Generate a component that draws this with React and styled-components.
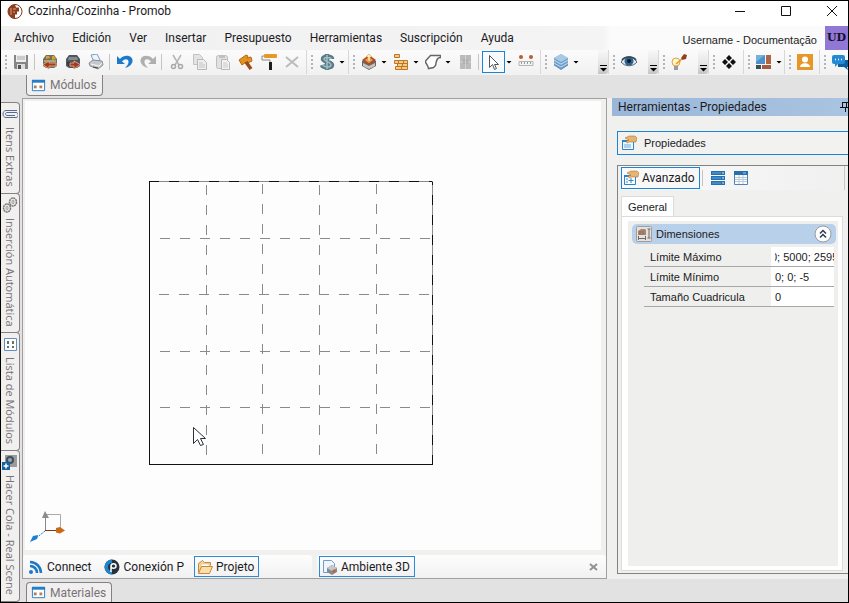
import React, { useLayoutEffect, useRef } from 'react'
import styled, { createGlobalStyle, css } from 'styled-components'

const ui = `Roboto, 'Open Sans', sans-serif`
const humanist = `'Open Sans', 'Noto Sans', sans-serif`
const classic = `'Liberation Sans', Arial, sans-serif`

const GlobalStyle = createGlobalStyle`
  * {
    box-sizing: border-box;
  }
  body {
    margin: 0;
    font-family: ${ui};
    font-size: 12px;
    line-height: 16px;
    color: #1b1b24;
  }
  button, input {
    margin: 0;
    padding: 0;
    border: none;
    background: none;
    font: inherit;
    color: inherit;
  }
  svg {
    display: block;
    flex: none;
  }
`

const Window = styled.div`
  display: flex;
  flex-direction: column;
  min-height: 100vh;
  overflow: hidden;
  border: 1px solid #000;
  background: #e2e2e2;
`

const TitleBar = styled.header`
  display: flex;
  align-items: center;
  height: 25px;
  padding-left: 6px;
  background: #fff;
`

const Title = styled.h1`
  flex: 1;
  margin: 0;
  padding: 0 0 6px 5px;
  font-size: 12px;
  font-weight: 400;
`

const WindowButtons = styled.div`
  display: flex;
  gap: 14px;
  padding-bottom: 6px;
`

const WindowButton = styled.button`
  display: grid;
  place-items: center;
  width: 32px;
  height: 18px;
`

const MenuBar = styled.nav`
  display: flex;
  align-items: center;
  gap: 18px;
  height: 24px;
  padding-left: 13px;
  background: linear-gradient(90deg, #f0f0f0, #f4f4f4 71%, #fbfbfb 72%);
`

const UserName = styled.span`
  margin-left: auto;
  padding-top: 4px;
  font-family: ${classic};
  font-size: 11px;
  white-space: nowrap;
`

const Avatar = styled.button`
  align-self: flex-end;
  width: 23px;
  height: 24px;
  margin-left: -10px;
  background: #9177d6;
  font-family: 'DejaVu Serif', serif;
  font-size: 11px;
  font-weight: 700;
  color: #17102c;
`

const ToolBar = styled.div`
  display: flex;
  height: 25px;
  padding-bottom: 1px;
  background: linear-gradient(#fbfbfb, #f1f1f1);
`

const Group = styled.div`
  display: flex;
  align-items: center;
  flex: none;
  width: ${({ $width }) => $width}px;
  border-right: 1px solid #d8d8d8;
`

const Grip = styled.i`
  flex: none;
  width: 2px;
  height: 15px;
  margin: 0 2px 0 4px;
  background: repeating-linear-gradient(#b5b5b5 0 2px, transparent 2px 4px);
`

const Tool = styled.button`
  display: grid;
  place-items: center;
  flex: none;
  width: 23px;
  height: 22px;
  ${({ $active }) =>
    $active &&
    css`
      border: 1px solid #1d83d4;
      background: #f8fbfe;
    `}
`

const Caret = styled.i`
  flex: none;
  width: 9px;
  &::after {
    content: '';
    display: block;
    margin-left: 1px;
    width: 6px;
    height: 3px;
    background: #000;
    clip-path: polygon(0 0, 100% 0, 50% 100%);
  }
`

const Separator = styled.i`
  flex: none;
  width: 1px;
  height: 16px;
  margin: 0 3px 0 2px;
  background: #c4c4c4;
`

const Overflow = styled.button`
  display: grid;
  place-items: end center;
  align-self: stretch;
  width: 10px;
  margin-left: auto;
  padding-bottom: 2px;
  border-radius: 0 0 3px 0;
  background: linear-gradient(#f8f8f8, #e4e4e4 60%, #c4c4c4);
`

const Workspace = styled.div`
  display: flex;
  flex: 1;
`

const SideTabs = styled.div`
  display: flex;
  flex-direction: column;
  flex: none;
  width: 19px;
  margin-right: 2px;
  padding-top: 28px;
`

const SideTab = styled.button`
  display: flex;
  align-items: center;
  gap: 5px;
  flex: ${({ $fill }) => ($fill ? '1' : 'none')};
  width: 19px;
  margin-top: -1px;
  padding: 3px 0 6px;
  border: 1px solid #858083;
  border-left: none;
  border-radius: 0 4px 4px 0;
  background: #f1f0ee;
  writing-mode: vertical-rl;
  font-family: ${humanist};
  font-size: 11px;
  color: #77737a;
  white-space: nowrap;
  svg {
    margin: 0 1px;
  }
`

const Desk = styled.div`
  display: flex;
  flex-direction: column;
  flex: 1;
  min-width: 0;
`

const EdgeStrip = styled.div`
  display: flex;
  flex: none;
  height: 23px;
  padding-left: 4px;
  align-items: ${({ $bottom }) => ($bottom ? 'flex-end' : 'flex-start')};
`

const EdgeTab = styled.button`
  display: flex;
  align-items: center;
  gap: 4px;
  height: ${({ $bottom }) => ($bottom ? 20 : 21)}px;
  padding: 0 5px 0 4px;
  border: 1px solid #858083;
  border-radius: ${({ $bottom }) => ($bottom ? '4px 4px 0 0' : '0 0 4px 4px')};
  border-${({ $bottom }) => ($bottom ? 'bottom' : 'top')}: none;
  background: #f1f0ee;
  color: #77737a;
`

const Body = styled.div`
  display: flex;
  flex: 1;
  background: #f0f0ee;
`

const MainPanel = styled.main`
  display: flex;
  flex-direction: column;
  flex: 1;
  min-width: 0;
  border: 1px solid #a0a0a0;
`

const Canvas = styled.div`
  position: relative;
  flex: 1;
  margin: 2px 5px 5px 2px;
  background: #fdfdfd;
`

const Drawing = styled.svg`
  width: 100%;
  height: 440px;
`

const Axes = styled.svg`
  position: absolute;
  left: 4px;
  bottom: 7px;
`

const ViewTabs = styled.div`
  display: flex;
  gap: 5px;
  height: 23px;
`

const ViewGroup = styled.div`
  display: flex;
  align-items: center;
  flex: 1;
  gap: ${({ $gap }) => $gap || 0}px;
  padding: 0 7px 0 2px;
  border-radius: 3px;
  background: linear-gradient(#fdfdfd, #f1f1f1);
`

const ViewTab = styled.button`
  display: flex;
  align-items: center;
  gap: 3px;
  height: 21px;
  padding: 0 4px 0 2px;
  border: 1px solid ${({ $active }) => ($active ? '#2a8ad8' : 'transparent')};
  white-space: nowrap;
`

const CloseTab = styled.button`
  margin-left: auto;
`

const SidePanel = styled.aside`
  flex: none;
  width: 236px;
  margin-left: 5px;
  font-family: ${classic};
  font-size: 11px;
`

const PanelHeader = styled.h2`
  display: flex;
  align-items: center;
  justify-content: space-between;
  height: 18px;
  margin: 0 0 15px;
  padding-left: 6px;
  background: linear-gradient(90deg, #9ab6d8, #a9c4e0);
  font-family: ${ui};
  font-size: 12px;
  font-weight: 400;
`

const Selection = styled.button`
  display: flex;
  align-items: center;
  gap: 7px;
  width: 231px;
  height: 24px;
  margin-left: 5px;
  padding-left: 3px;
  border: 1px solid #1d83d4;
  border-right: none;
  background: #f2f2f1;
`

const Inspector = styled.div`
  display: flex;
  flex-direction: column;
  height: 409px;
  margin: 10px 0 0 5px;
  padding-left: 3px;
  border: 1px solid #838383;
  border-right: none;
`

const InspectorBar = styled.div`
  display: flex;
  align-items: center;
  height: 24px;
  margin-right: 3px;
  border-right: 1px solid #c9c9c9;
  background: linear-gradient(90deg, #fafafa, #f0f0f0);
`

const Advanced = styled.button`
  display: flex;
  align-items: center;
  gap: 3px;
  width: 79px;
  height: 22px;
  padding-left: 1px;
  border: 1px solid #1d83d4;
  font-family: ${ui};
  font-size: 12px;
`

const PageTab = styled.button`
  align-self: flex-start;
  width: 53px;
  height: 21px;
  margin: 6px 0 -1px;
  border: 1px solid #dcdcdc;
  border-bottom: none;
  background: #fff;
`

const Page = styled.div`
  flex: 1;
  margin: 0 5px 2px 0;
  padding: 4px 4px 4px 6px;
  border: 1px solid #dcdcdc;
  background: #fff;
`

const PageInner = styled.div`
  height: 100%;
  padding: 3px 2px 0 4px;
  background: #efefed;
`

const Section = styled.h3`
  display: flex;
  align-items: center;
  gap: 4px;
  height: 20px;
  margin: 0 0 3px;
  padding: 0 4px;
  border-radius: 5px;
  background: #b8d0ea;
  font-size: 11px;
  font-weight: 400;
  button {
    margin-left: auto;
  }
`

const Field = styled.div`
  display: grid;
  grid-template-columns: 1fr 63px;
  align-items: center;
  height: 20px;
  margin: 0 2px 0 12px;
  padding-left: 6px;
  border-bottom: 1px solid #a8a8a8;
  input {
    width: 100%;
    height: 19px;
    padding: 0;
    border: 0 solid #fff;
    border-left-width: 4px;
    background: #fff;
  }
`

const Icon = ({ children, size = 16 }) => (
  <svg width={size} height={size} viewBox="0 0 16 16" fill="none" aria-hidden="true">
    {children}
  </svg>
)

const icons = {
  save: (
    <>
      <path d="M1 1h14v14H2l-1-1z" fill="#858585" />
      <path d="M3 1h10v7H3z" fill="#eee" />
      <path d="M4 3h8M4 5h8" stroke="#aaa" />
      <path d="M4 10h8v5H4z" fill="#ddd" />
      <path d="M5 11h3v4H5z" fill="#555" />
    </>
  ),
  importBox: (
    <>
      <path d="M4 1h8l3 4v7l-3 2H4l-3-2V5z" fill="#6d735a" />
      <path d="M4 2h3l1 2-4 1zM10 2h2l2 3-4 1z" fill="#e49b32" />
      <path d="M2 6h12v2H2z" fill="#a8a681" />
      <path d="M7 7v2h7v3H7v3L1 10.500z" fill="#a23b1e" stroke="#e2a27e" />
    </>
  ),
  exportBox: (
    <>
      <path d="M4 1h8l3 4v7l-3 2H4l-3-2V5z" fill="#52565b" />
      <path d="M4 3h8l1 3H3z" fill="#858b90" />
      <path d="M2 8h5v4H3z" fill="#34373a" />
      <path d="M9 7v2H5v3h4v3l6-4.500z" fill="#a23b1e" stroke="#dc9c80" />
    </>
  ),
  printer: (
    <>
      <path d="M3 1l6-1 3 6-6 2z" fill="#eef4fb" stroke="#7c9cc4" />
      <path d="M1 9l4-3 9 1 1 4-5 4-8-3z" fill="#c5c8cb" stroke="#8b8f94" />
      <path d="M3 10l8 2 3-3" stroke="#f7f7f7" />
      <path d="M5 13l5 1" stroke="#444" />
    </>
  ),
  undo: (
    <path d="M0 2v8h8L5 7.500C8 4 12 5 11.500 8.500 11 11 9.500 12 8 14c4-1 8-4 7.500-8C15 1 7 0 3 5z" fill="#1d79c9" />
  ),
  redo: (
    <path d="M16 2v8H8l3-2.500C8 4 4 5 4.500 8.500 5 11 6.500 12 8 14 4 13 0 10 .5 6 1 1 9 0 13 5z" fill="#aeb0b0" />
  ),
  cut: (
    <>
      <path d="M4 1l6 10M12 1L6 11" stroke="#b5b5b5" strokeWidth="1.500" />
      <circle cx="4.500" cy="12.500" r="2" stroke="#a8a8a8" strokeWidth="1.500" />
      <circle cx="11.500" cy="12.500" r="2" stroke="#a8a8a8" strokeWidth="1.500" />
    </>
  ),
  copy: (
    <>
      <path d="M1.500.5h6l3 3v7h-9z" fill="#e3e3e3" stroke="#c2c2c2" />
      <path d="M5.500 5.500h6l3 3v7h-9z" fill="#eee" stroke="#b8b8b8" />
      <path d="M7 9h4M7 11h6M7 13h6" stroke="#c4c4c4" />
    </>
  ),
  paste: (
    <>
      <rect x="1.500" y="1.500" width="11" height="13" rx="2" fill="#e2e2e2" stroke="#bdbdbd" />
      <path d="M4 1h6v3H4z" fill="#c0c0c0" />
      <path d="M6.500 5.500h5l3 3v7h-8z" fill="#f3f3f3" stroke="#b8b8b8" />
      <path d="M8 9h4M8 11h5M8 13h5" stroke="#c8c8c8" />
    </>
  ),
  hammer: (
    <>
      <path d="M1 6l7-5 2 1-1 2 4-1 1 4-4 2-2-1-4 3z" fill="#e0931f" stroke="#b86a12" />
      <path d="M8 8l5 7" stroke="#9b4a1c" strokeWidth="3.500" />
    </>
  ),
  roller: (
    <>
      <rect x="3" y="0" width="13" height="4" rx="1" fill="#e59a25" />
      <path d="M3 2H1v4h8v3" stroke="#8a8a8a" />
      <path d="M8 8h3v8H8z" fill="#1d1d1d" />
    </>
  ),
  remove: <path d="M2 3l12 10M14 3L2 13" stroke="#bcbcbc" strokeWidth="2" />,
  money: (
    <>
      <path d="M13 5c0-3-9-3-9 0s9 3 9 6-9 3-10 0M8 0v16" stroke="#5c7b86" strokeWidth="4.500" />
      <path d="M12 5c0-2-7-2-7 0s7 3 7 6-7 2-8 0M8 1v14" stroke="#9fc0c9" strokeWidth="1.500" />
    </>
  ),
  module: (
    <>
      <path d="M1 7l7-4 7 4v5l-7 4-7-4z" fill="#6b6764" />
      <path d="M2 9l6 3 6-3v3l-6 3-6-3z" fill="#c8c4bf" />
      <path d="M1 6l7-5 7 5-7 5z" fill="#b24c24" />
      <path d="M4 6l4-3 4 3-4 3z" fill="#e7a35a" />
      <path d="M8 0l3 3H9v4H7V3H5z" fill="#fff1c9" stroke="#d78b20" strokeWidth=".5" />
    </>
  ),
  bricks: (
    <path
      d="M1.500.5h5v3h-5zM1.500 6.500h4v3h-4zM5.500 6.500h5v3h-5zM10.500 6.500h4v3h-4zM4.500 9.500h5v3h-5zM9.500 9.500h5v3h-5zM2.500 12.500h6v3h-6zM8.500 12.500h6v3h-6z"
      fill="#f3cc8b"
      stroke="#bf7420"
    />
  ),
  shape: <path d="M5.500 1.500h10v2c-3 0-4 2-5 8l-2 2-5 1C3 11 0 9 .5 7z" fill="#fff" stroke="#666" strokeWidth="1.500" />,
  door: (
    <>
      <path d="M3 1h11v14H3z" fill="#b9bbbd" />
      <path d="M8.500 1v14M3 8h11" stroke="#d0d1d2" />
      <path d="M7 5v5M10 5v5" stroke="#9ea1a3" />
    </>
  ),
  pointer: <path d="M3.500 1.500v12l3-3 2 5 2-1-2-4h4z" fill="#fff" stroke="#555" />,
  measure: (
    <>
      <circle cx="3" cy="3" r="2" fill="#b56034" />
      <circle cx="13" cy="3" r="2" fill="#b56034" />
      <path d="M1 7.500h14v4H1z" fill="#f4f4f4" stroke="#b5b5b5" />
      <path d="M3.500 8v2M6.500 8v2M9.500 8v2M12.500 8v2" stroke="#999" />
    </>
  ),
  layers: (
    <>
      <path d="M1 8l7 4 7-4v3l-7 5-7-5z" fill="#6f9cc7" />
      <path d="M1 4l7-4 7 4v5l-7 4-7-4z" fill="#85afd5" />
      <path d="M1 4l7-4 7 4-7 4z" fill="#a8cae5" />
      <path d="M1 5l7 4 7-4M1 8l7 4 7-4M1 11l7 4 7-4" stroke="#5f94c5" />
      <path d="M1 6l7 4 7-4M1 9l7 4 7-4" stroke="#c4daec" />
    </>
  ),
  eye: (
    <>
      <path d="M0 8c4-7 12-7 16 0-4 5-12 5-16 0z" fill="#dfe5e9" stroke="#50606d" />
      <circle cx="8" cy="7" r="4.500" fill="#2f6391" />
      <circle cx="8" cy="7" r="2" fill="#0c1b2a" />
      <path d="M1 6c3-4 11-4 14 0" stroke="#3a4854" strokeWidth="1.500" />
    </>
  ),
  light: (
    <>
      <circle cx="5" cy="8" r="4" fill="#fff4c4" stroke="#d9a553" />
      <path d="M3 12h4v4H3z" fill="#9a9a9a" />
      <path d="M10 4l3-4 3 1-1 4-4 1z" fill="#8d421d" />
      <path d="M5 10l6-5" stroke="#e39426" strokeWidth="1.500" />
    </>
  ),
  diamonds: (
    <path d="M8 1l3 3-3 3-3-3zM4 5l3 3-3 3-3-3zM12 5l3 3-3 3-3-3zM8 9l3 3-3 3-3-3z" fill="#111" />
  ),
  blocks: (
    <>
      <path d="M0 1h9v9H0z" fill="#4d8fc9" />
      <path d="M10 1h5v9h-5z" fill="#ad6545" />
      <path d="M0 11h5v4H0z" fill="#3d4e5b" />
      <path d="M6 11h9v4H6z" fill="#a9583b" />
      <path d="M0 1h9L0 8z" fill="#76b0de" />
    </>
  ),
  person: (
    <>
      <path d="M0 0h16v16H0z" fill="#e59728" />
      <circle cx="8" cy="5.500" r="3" fill="#fff" />
      <path d="M3 13c0-5 10-5 10 0z" fill="#fff" />
    </>
  ),
  chat: (
    <>
      <path d="M6 6h10v7h-1l1 3-4-3H6z" fill="#115f9f" />
      <rect y="1" width="13" height="9" rx="2" fill="#2589d4" />
      <path d="M3 9v4l4-4z" fill="#2589d4" />
      <path d="M3 5.500h1M6 5.500h1M9 5.500h1" stroke="#fff" strokeWidth="1.500" />
    </>
  ),
  cabinet: (
    <>
      <path d="M1.500 2.500h13v11h-13z" fill="#fff" stroke="#257dc6" />
      <path d="M1 2h14v3H1z" fill="#257dc6" />
      <path d="M3 8h3v3H3z" fill="#9a8271" />
      <path d="M9 8h3v3H9z" fill="#bd7c55" />
    </>
  ),
  clip: <path d="M15 4.500H4c-4 0-4 7 0 7h10c3 0 3-5 0-5H5c-2 0-2 3 0 3h8" stroke="#556d95" />,
  chain: (
    <>
      <g stroke="#777" strokeWidth="1.500" strokeDasharray="2 .5">
        <ellipse cx="11" cy="5" rx="3.500" ry="4" />
        <ellipse cx="5" cy="11" rx="3.500" ry="4" />
      </g>
      <g stroke="#999">
        <ellipse cx="11" cy="5" rx="1" ry="2" />
        <ellipse cx="5" cy="11" rx="1" ry="2" />
      </g>
    </>
  ),
  list: (
    <>
      <path d="M2.500 2.500h12v12h-12z" fill="#fff" stroke="#5f91c0" />
      <path d="M5 5h2v3H5zM10 5h2v3h-2zM5 10h2v2H5zM10 10h2v2h-2z" fill="#68706e" />
    </>
  ),
  camera: (
    <>
      <path d="M3 1h12v12H3z" fill="#999b9d" />
      <circle cx="8" cy="6" r="4" fill="#424d58" />
      <circle cx="8" cy="6" r="2" fill="#91a9bd" />
      <path d="M0 8h8v8H0z" fill="#16639f" />
      <path d="M4 9.500v5M1.500 12h5" stroke="#fff" strokeWidth="1.500" />
    </>
  ),
  feed: (
    <>
      <circle cx="3" cy="13" r="2" fill="#1e78c4" />
      <path d="M2 7c4 0 7 3 7 7M2 3c6 0 11 5 11 11" stroke="#1e78c4" strokeWidth="2.500" />
    </>
  ),
  connect: (
    <>
      <circle cx="8" cy="8" r="7.500" fill="#25323e" />
      <path d="M8 .5a7.500 7.500 0 0 0 0 15V12a4 4 0 0 1 0-8z" fill="#1e86cc" />
      <path d="M7 13V7c0-3 5-3 5 0s-5 3-5 0" fill="#25323e" stroke="#fff" strokeWidth="1.500" />
    </>
  ),
  folder: (
    <>
      <path d="M1.500 13.500v-9l4-3 2 2h6v3" fill="#f4d69a" stroke="#c8873a" />
      <path d="M4 5h8v3H4z" fill="#fff" stroke="#d3ad72" strokeWidth=".5" />
      <path d="M1.500 14.500l3-7h11l-3 7z" fill="#f9dfaa" stroke="#c8873a" />
    </>
  ),
  view3d: (
    <>
      <path d="M1.500 1.500h8l3 3v9h-11z" fill="#eef6fd" stroke="#6e9dcc" />
      <path d="M5 9l5-3 5 3v4l-5 3-5-3z" fill="#868b90" />
      <path d="M5 9l5-3 5 3-5 3z" fill="#c5c9cc" />
      <circle cx="12" cy="12" r="1.500" fill="#c85e2a" />
    </>
  ),
  properties: (
    <>
      <path d="M1.500 5.500h11v9h-11z" fill="#eef6ff" stroke="#2b83c8" />
      <path d="M1 5h12v2H1z" fill="#2b83c8" />
      <path d="M3 10h7M3 12h7" stroke="#70a9d6" />
      <path d="M4 3l4-2h6l2 2-1 4H8L6 8 5 6l3-1z" fill="#e5b571" stroke="#a0652a" strokeWidth=".5" />
    </>
  ),
  advanced: (
    <>
      <path d="M1.500 5.500h11v9h-11z" fill="#fff" stroke="#2b83c8" />
      <path d="M1 5h12v2H1z" fill="#2b83c8" />
      <path d="M3 9h2M3 12h2M8 8v5M5.500 10.500h5" stroke="#2b83c8" />
      <path d="M4 3l4-2h6l2 2-1 4H8L6 8 5 6l3-1z" fill="#e5b571" stroke="#a0652a" strokeWidth=".5" />
    </>
  ),
  rows: (
    <>
      <path d="M1 1h14v4H1zM1 6h14v4H1zM1 11h14v4H1z" fill="#286fae" />
      <path d="M2 3h9M2 8h9M2 13h9" stroke="#65a7dc" />
      <path d="M12 3h2M12 8h2M12 13h2" stroke="#d8edfc" />
    </>
  ),
  grid: (
    <>
      <path d="M1.500 1.500h13v13h-13z" fill="#fff" stroke="#4d86b5" />
      <path d="M1 1h14v4H1z" fill="#286fae" />
      <path d="M2 7.500h12M2 9.500h12M2 11.500h12M6 5v9M10 5v9" stroke="#b9cad8" />
      <path d="M10 3h3" stroke="#9cc9eb" />
    </>
  ),
  dimensions: (
    <>
      <rect x=".5" y=".5" width="15" height="15" rx="1" fill="#e4e1de" stroke="#a09d9a" />
      <path d="M2 5l3-2h4l1 1v5H2z" fill="#a8866f" />
      <path d="M4 5v4M7 5v4" stroke="#84695a" />
      <path d="M2 12.500h8M2.500 10v4M9.500 10v4M13 3v9M11.500 3h3M11.500 12h3" stroke="#6a6a6a" />
    </>
  ),
}

const toolGroups = [
  {
    width: 306,
    items: [
      ['save', 'Guardar'], '|',
      ['importBox', 'Importar'], ['exportBox', 'Exportar'], ['printer', 'Imprimir'], '|',
      ['undo', 'Deshacer'], ['redo', 'Rehacer'], '|',
      ['cut', 'Cortar'], ['copy', 'Copiar'], ['paste', 'Pegar'],
      ['hammer', 'Montar'], ['roller', 'Pintar'], ['remove', 'Borrar'],
    ],
  },
  { width: 42, items: [['money', 'Presupuesto'], 'v'] },
  {
    width: 192,
    items: [
      ['module', 'Módulo'], 'v', ['bricks', 'Paredes'], 'v', ['shape', 'Forma'], 'v',
      ['door', 'Puerta'], '|', ['pointer', 'Seleccionar', true], 'v', ['measure', 'Medir'],
    ],
  },
  { width: 68, items: [['layers', 'Capas'], 'v'], more: true },
  { width: 50, items: [['eye', 'Ver']], more: true },
  { width: 50, items: [['light', 'Luces']], more: true },
  { width: 35, items: [['diamonds', 'Mover']] },
  { width: 41, items: [['blocks', 'Paneles'], 'v'] },
  { width: 35, items: [['person', 'Usuario']] },
  { width: 32, items: [['chat', 'Mensajes']] },
]

const menus = ['Archivo', 'Edición', 'Ver', 'Insertar', 'Presupuesto', 'Herramientas', 'Suscripción', 'Ayuda']

const sideTabs = [
  ['clip', 'Itens Extras'],
  ['chain', 'Inserción Automática'],
  ['list', 'Lista de Módulos'],
  ['camera', 'Hacer Cola - Real Scene'],
]

const fields = [
  { id: 'max', label: 'Límite Máximo', value: '0; 5000; 2595', scroll: 4 },
  { id: 'min', label: 'Límite Mínimo', value: '0; 0; -5' },
  { id: 'grid', label: 'Tamaño Cuadricula', value: '0' },
]

function ToolItem({ item }) {
  if (item === '|') return <Separator />
  if (item === 'v') return <Caret />
  const [icon, label, active] = item
  return (
    <Tool aria-label={label} $active={active}>
      <Icon>{icons[icon]}</Icon>
    </Tool>
  )
}

function FloorPlan() {
  // [position, first dash]
  const rows = [[137, 135], [193, 134], [250, 135], [306, 135]]
  const columns = [[181, 84], [237, 83], [294, 84], [351, 83]]
  return (
    <Drawing fill="none" shapeRendering="crispEdges" aria-label="Plano">
      <g stroke="#8a8a8a" strokeDasharray="10 10">
        {rows.map(([y, x]) => (
          <path key={y} d={`M${x} ${y + 0.5}H406`} />
        ))}
        {columns.map(([x, y]) => (
          <path key={x} d={`M${x + 0.5} ${y}V355`} />
        ))}
      </g>
      <path d="M125 80.500h283M407.500 81v282" stroke="#8a8a8a" />
      <path d="M124.500 81v282.500h283" stroke="#111" />
      <path d="M124 80.500h283" stroke="#111" strokeDasharray="10 10" />
      <path d="M407.500 81v282" stroke="#111" strokeDasharray="10 10" strokeDashoffset="7" />
      <path
        d="M168.500 326.500v16l4-4 3 6 3-1-3-6h5z"
        fill="#fff"
        stroke="#2b2f3a"
        shapeRendering="auto"
      />
    </Drawing>
  )
}

function PropertyField({ field }) {
  const input = useRef(null)
  useLayoutEffect(() => {
    input.current.scrollLeft = field.scroll || 0
  }, [field.scroll])
  return (
    <Field>
      <label htmlFor={field.id}>{field.label}</label>
      <input id={field.id} ref={input} type="text" defaultValue={field.value} />
    </Field>
  )
}

export default function App() {
  return (
    <Window>
      <GlobalStyle />
      <TitleBar>
        <svg width="16" height="20" viewBox="0 0 16 20" fill="none">
          <circle cx="8" cy="7.500" r="7" fill="#fff" stroke="#7b351e" />
          <path d="M8 .5a7 7 0 0 0 0 14v-4h2v-3h2v-4H9z" fill="#8d3e20" />
          <path d="M4 4v7M6 5h3M6 8h2" stroke="#e1a078" />
        </svg>
        <Title>Cozinha/Cozinha - Promob</Title>
        <WindowButtons>
          <WindowButton aria-label="Minimizar">
            <svg width="10" height="10"><path d="M0 5.500h10" stroke="#111" /></svg>
          </WindowButton>
          <WindowButton aria-label="Maximizar">
            <svg width="10" height="10"><path d="M.5.5h9v9h-9z" fill="none" stroke="#111" /></svg>
          </WindowButton>
          <WindowButton aria-label="Cerrar">
            <svg width="10" height="10"><path d="M0 0l10 10M10 0L0 10" stroke="#111" /></svg>
          </WindowButton>
        </WindowButtons>
      </TitleBar>
      <MenuBar>
        {menus.map(menu => (
          <button key={menu}>{menu}</button>
        ))}
        <UserName>Username - Documentação</UserName>
        <Avatar>UD</Avatar>
      </MenuBar>
      <ToolBar>
        {toolGroups.map((group, index) => (
          <Group key={index} $width={group.width}>
            <Grip />
            {group.items.map((item, i) => (
              <ToolItem key={i} item={item} />
            ))}
            {group.more && (
              <Overflow aria-label="Más">
                <svg width="7" height="7"><path d="M0 .5h7" stroke="#000" /><path d="M0 3h7L3.500 6.500z" /></svg>
              </Overflow>
            )}
          </Group>
        ))}
      </ToolBar>
      <Workspace>
        <SideTabs>
          {sideTabs.map(([icon, label], index) => (
            <SideTab key={label} $fill={index === sideTabs.length - 1}>
              <Icon>{icons[icon]}</Icon>
              {label}
            </SideTab>
          ))}
        </SideTabs>
        <Desk>
          <EdgeStrip>
            <EdgeTab><Icon size={15}>{icons.cabinet}</Icon>Módulos</EdgeTab>
          </EdgeStrip>
          <Body>
            <MainPanel>
              <Canvas>
                <FloorPlan />
                <Axes width="40" height="36" fill="none">
                  <path d="M16.500 23V7.500h15V23" stroke="#aaa" />
                  <path d="M16.500 23V8" stroke="#888" />
                  <path d="M16 4l4 7h-7z" fill="#8c8c8c" />
                  <path d="M16 23.500h12" stroke="#8c2f1c" />
                  <path d="M27 21l4-1 5 3.500-5 3-4-1z" fill="#c96a14" />
                  <path d="M16 24L6 32" stroke="#1b7fd6" strokeDasharray="2 1" />
                  <path d="M1 35l3-6 5-1-1 4z" fill="#1b7fd6" />
                </Axes>
              </Canvas>
              <ViewTabs>
                <ViewGroup $gap={5}>
                  <ViewTab><Icon>{icons.feed}</Icon>Connect</ViewTab>
                  <ViewTab><Icon>{icons.connect}</Icon>Conexión P</ViewTab>
                  <ViewTab $active><Icon>{icons.folder}</Icon>Projeto</ViewTab>
                </ViewGroup>
                <ViewGroup>
                  <ViewTab $active><Icon>{icons.view3d}</Icon>Ambiente 3D</ViewTab>
                  <CloseTab aria-label="Cerrar vista">
                    <svg width="10" height="8"><path d="M1 1l7 6M8 1L1 7" stroke="#8e9292" strokeWidth="2" /></svg>
                  </CloseTab>
                </ViewGroup>
              </ViewTabs>
            </MainPanel>
            <SidePanel>
              <PanelHeader>
                Herramientas - Propiedades
                <svg width="8" height="12" fill="none"><path d="M2.500 1.500h6v5M0 6.500h8M2.500 1v5M5.500 7v4M6.500 1v5" stroke="#111" /></svg>
              </PanelHeader>
              <Selection><Icon>{icons.properties}</Icon>Propiedades</Selection>
              <Inspector>
                <InspectorBar>
                  <Advanced><Icon>{icons.advanced}</Icon>Avanzado</Advanced>
                  <Separator />
                  <Tool aria-label="Lista"><Icon>{icons.rows}</Icon></Tool>
                  <Tool aria-label="Tabla"><Icon>{icons.grid}</Icon></Tool>
                </InspectorBar>
                <PageTab>General</PageTab>
                <Page>
                  <PageInner>
                    <Section>
                      <Icon>{icons.dimensions}</Icon>
                      Dimensiones
                      <button aria-label="Contraer">
                        <svg width="18" height="18" fill="none">
                          <circle cx="9" cy="9" r="8" fill="#fdfdfd" stroke="#9a9a9a" />
                          <path d="M6 8.500l3-3 3 3M6 12.500l3-3 3 3" stroke="#333a55" strokeWidth="1.500" />
                        </svg>
                      </button>
                    </Section>
                    {fields.map(field => (
                      <PropertyField key={field.id} field={field} />
                    ))}
                  </PageInner>
                </Page>
              </Inspector>
            </SidePanel>
          </Body>
          <EdgeStrip $bottom>
            <EdgeTab $bottom><Icon size={15}>{icons.cabinet}</Icon>Materiales</EdgeTab>
          </EdgeStrip>
        </Desk>
      </Workspace>
    </Window>
  )
}
